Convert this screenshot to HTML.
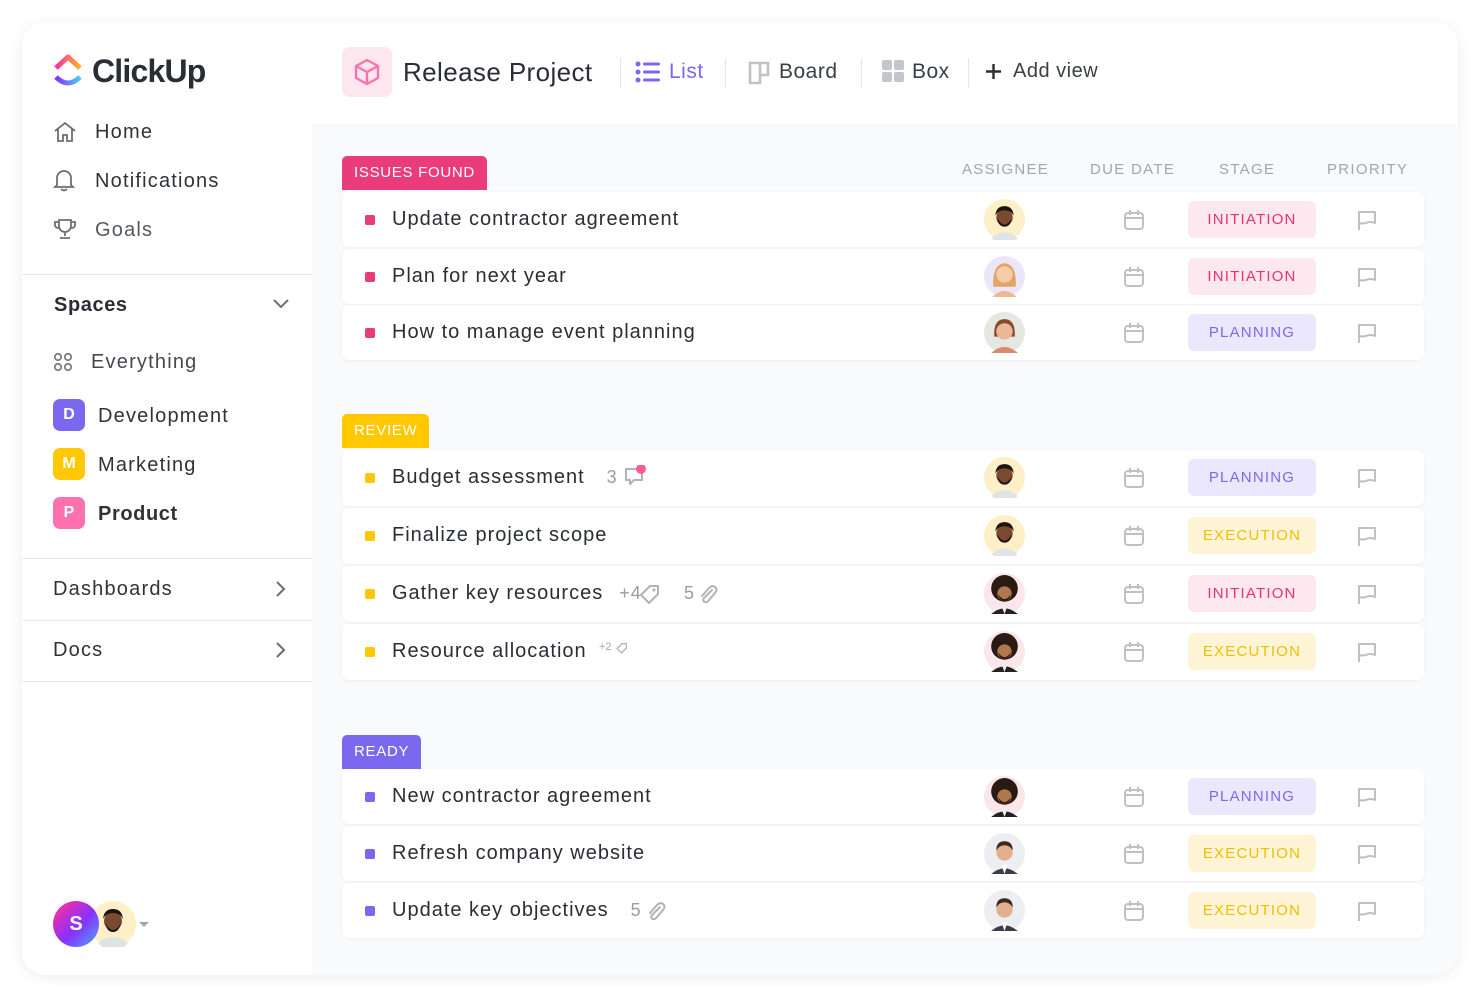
<!DOCTYPE html>
<html><head><meta charset="utf-8"><style>
*{margin:0;padding:0;box-sizing:border-box}
body{width:1480px;height:987px;background:#fff;font-family:"Liberation Sans",sans-serif;position:relative;overflow:hidden;color:#2a2e34}
.card{position:absolute;left:22px;top:22px;width:1436px;height:953px;border-radius:24px;background:#fff;box-shadow:0 2px 14px rgba(0,0,0,.08);overflow:hidden}
.main{position:absolute;left:290px;top:102px;width:1146px;height:851px;background:#f9fafb}
.a{position:absolute}
.nav{position:absolute;font-size:20px;color:#2f3338;letter-spacing:1.2px}
.hr{position:absolute;left:22px;width:290px;height:1px;background:#e8e9ec}
.sq{position:absolute;left:53px;width:32px;height:32px;border-radius:7px;color:#fff;font-weight:bold;font-size:16px;text-align:center;line-height:32px}
.row{position:absolute;left:342px;width:1082px;height:55px;background:#fff;border-radius:7px;box-shadow:0 1px 3px rgba(0,0,0,.05)}
.row .dot{position:absolute;left:23px;top:23px;width:10px;height:10px;border-radius:2px}
.row .t{position:absolute;left:50px;top:16px;font-size:20px;letter-spacing:1px;color:#2a2e34;white-space:nowrap}
.row .m{color:#9a9ca2;font-size:18px;margin-left:22px}
.row .av{position:absolute;left:642px;top:7px}
.row .cal{position:absolute;left:781px;top:17px}
.row .fl{position:absolute;left:1014px;top:17px}
.pill{position:absolute;left:846px;top:9px;width:128px;height:37px;border-radius:6px;font-size:15px;letter-spacing:1.2px;text-align:center;line-height:37px}
.ini{background:#fde8ef;color:#e8326f}
.pla{background:#ebe8fd;color:#7b68ee}
.exe{background:#fff5d6;color:#f0be00}
.tag{position:absolute;left:342px;height:34px;border-radius:5px 5px 0 0;color:#fff;font-size:15px;letter-spacing:.7px;padding:0 12px;line-height:34px}
.col{position:absolute;top:161px;font-size:15px;letter-spacing:1.3px;color:#a3a6ab}
</style></head><body>
<div class="card">
<div class="main"></div>
</div>
<svg class="a" style="left:53px;top:53px" width="30" height="36" viewBox="0 0 30 36">
<defs><linearGradient id="g1" x1="0" x2="1"><stop offset="0" stop-color="#fa2bb0"/><stop offset="1" stop-color="#ffb321"/></linearGradient>
<linearGradient id="g2" x1="0" x2="1"><stop offset="0" stop-color="#8930fd"/><stop offset="1" stop-color="#49ccf9"/></linearGradient></defs>
<path d="M3 15 L15 4 L27 15" fill="none" stroke="url(#g1)" stroke-width="5" stroke-linejoin="round"/>
<path d="M3 24 Q15 36 27 24" fill="none" stroke="url(#g2)" stroke-width="5"/>
</svg>
<div class="a" style="left:92px;top:53px;font-size:32px;font-weight:bold;letter-spacing:-.8px;color:#292d34">ClickUp</div>

<svg class="a" style="left:53px;top:121px" width="24" height="22" viewBox="0 0 24 22" fill="none" stroke="#6b6f76" stroke-width="1.8"><path d="M2 10 L12 2 L22 10 M5 8 V20 H10 V14 H14 V20 H19 V8"/></svg>
<div class="nav" style="left:95px;top:121px">Home</div>
<svg class="a" style="left:53px;top:168px" width="22" height="24" viewBox="0 0 22 24" fill="none" stroke="#6b6f76" stroke-width="1.8"><path d="M4 17 V10 A7 7 0 0 1 18 10 V17 L20 19 H2 Z M8 21 Q11 24 14 21"/></svg>
<div class="nav" style="left:95px;top:170px">Notifications</div>
<svg class="a" style="left:53px;top:218px" width="24" height="22" viewBox="0 0 24 22" fill="none" stroke="#6b6f76" stroke-width="1.8"><path d="M6 2 H18 V8 A6 6 0 0 1 6 8 Z M6 4 H2 V7 Q2 10 6 10 M18 4 H22 V7 Q22 10 18 10 M12 14 V18 M7 20 H17"/></svg>
<div class="nav" style="left:95px;top:219px;color:#55595f">Goals</div>
<div class="hr" style="top:274px"></div>
<div class="nav" style="left:54px;top:294px;font-weight:bold;color:#2a2e34;letter-spacing:.6px">Spaces</div>
<svg class="a" style="left:272px;top:298px" width="18" height="12" viewBox="0 0 18 12" fill="none" stroke="#6b6f76" stroke-width="2"><path d="M2 2 L9 9 L16 2"/></svg>
<svg class="a" style="left:53px;top:352px" width="20" height="20" viewBox="0 0 20 20" fill="none" stroke="#7a7e85" stroke-width="1.8"><circle cx="5" cy="5" r="3.2"/><circle cx="15" cy="5" r="3.2"/><circle cx="5" cy="15" r="3.2"/><circle cx="15" cy="15" r="3.2"/></svg>
<div class="nav" style="left:91px;top:351px;color:#45494f">Everything</div>
<div class="sq" style="top:399px;background:#7b68ee">D</div>
<div class="nav" style="left:98px;top:405px">Development</div>
<div class="sq" style="top:448px;background:#ffc800">M</div>
<div class="nav" style="left:98px;top:454px">Marketing</div>
<div class="sq" style="top:497px;background:#fd71af">P</div>
<div class="nav" style="left:98px;top:503px;font-weight:bold;letter-spacing:.6px">Product</div>
<div class="hr" style="top:558px"></div>
<div class="nav" style="left:53px;top:578px">Dashboards</div>
<svg class="a" style="left:275px;top:580px" width="12" height="18" viewBox="0 0 12 18" fill="none" stroke="#6b6f76" stroke-width="2"><path d="M2 2 L9 9 L2 16"/></svg>
<div class="hr" style="top:620px"></div>
<div class="nav" style="left:53px;top:639px">Docs</div>
<svg class="a" style="left:275px;top:641px" width="12" height="18" viewBox="0 0 12 18" fill="none" stroke="#6b6f76" stroke-width="2"><path d="M2 2 L9 9 L2 16"/></svg>
<div class="hr" style="top:681px"></div>

<svg class="a" style="left:90px;top:901px" width="46" height="46" viewBox="0 0 46 46"><circle cx="23" cy="23" r="23" fill="#fdf0c8"/><circle cx="23" cy="20" r="9" fill="#7a4a30"/><path d="M13 18 Q14 8 23 8 Q32 8 33 18 Q30 12 23 12 Q16 12 13 18Z" fill="#1e140e"/><path d="M15 22 Q23 36 31 22 Q29 31 23 31 Q17 31 15 22Z" fill="#1e140e"/><path d="M8 42 Q23 30 38 42 L34 46 H12Z" fill="#dfe3e6"/></svg>
<div class="a" style="left:53px;top:901px;width:46px;height:46px;border-radius:50%;background:linear-gradient(135deg,#f531a4 10%,#8930fd 55%,#49a8f9);color:#fff;font-weight:bold;font-size:20px;text-align:center;line-height:46px">S</div>
<div class="a" style="left:139px;top:922px;width:0;height:0;border-left:5px solid transparent;border-right:5px solid transparent;border-top:5px solid #a3a6ab"></div>

<div class="a" style="left:342px;top:47px;width:50px;height:50px;border-radius:8px;background:#fde7ee"></div>
<svg class="a" style="left:352px;top:57px" width="30" height="30" viewBox="0 0 30 30" fill="none" stroke="#fd71af" stroke-width="2.4" stroke-linejoin="round"><path d="M15 3 L26 9 V21 L15 27 L4 21 V9 Z M4 9 L15 15 L26 9 M15 15 V27"/></svg>
<div class="a" style="left:403px;top:57px;font-size:26px;color:#2a2e34;letter-spacing:.4px">Release Project</div>
<div class="a" style="left:620px;top:58px;width:1px;height:30px;background:#e5e6e9"></div>
<svg class="a" style="left:635px;top:60px" width="26" height="24" viewBox="0 0 26 24" fill="#7b68ee"><circle cx="3" cy="4" r="2.5"/><circle cx="3" cy="12" r="2.5"/><circle cx="3" cy="20" r="2.5"/><rect x="8" y="2.5" width="17" height="3" rx="1.5"/><rect x="8" y="10.5" width="17" height="3" rx="1.5"/><rect x="8" y="18.5" width="17" height="3" rx="1.5"/></svg>
<div class="a" style="left:669px;top:60px;font-size:21px;color:#7b68ee;letter-spacing:.5px">List</div>
<div class="a" style="left:725px;top:58px;width:1px;height:30px;background:#e5e6e9"></div>
<svg class="a" style="left:748px;top:61px" width="22" height="24" viewBox="0 0 22 24" fill="none" stroke="#bfc2c7" stroke-width="2.6"><path d="M2 2 H20 V14 H12 V22 H2 Z M12 2 V14"/></svg>
<div class="a" style="left:779px;top:60px;font-size:21px;color:#3a3e44;letter-spacing:.5px">Board</div>
<div class="a" style="left:861px;top:58px;width:1px;height:30px;background:#e5e6e9"></div>
<svg class="a" style="left:882px;top:60px" width="22" height="22" viewBox="0 0 22 22" fill="#c3c6cb"><rect x="0" y="0" width="10" height="10" rx="2"/><rect x="12" y="0" width="10" height="10" rx="2"/><rect x="0" y="12" width="10" height="10" rx="2"/><rect x="12" y="12" width="10" height="10" rx="2"/></svg>
<div class="a" style="left:912px;top:60px;font-size:21px;color:#3a3e44;letter-spacing:.5px">Box</div>
<div class="a" style="left:968px;top:58px;width:1px;height:30px;background:#e5e6e9"></div>
<svg class="a" style="left:985px;top:63px" width="17" height="17" viewBox="0 0 17 17" stroke="#2a2e34" stroke-width="2.4"><path d="M8.5 1 V16 M1 8.5 H16"/></svg>
<div class="a" style="left:1013px;top:60px;font-size:20px;color:#3a3e44;letter-spacing:.5px">Add view</div>

<div class="col" style="left:962px">ASSIGNEE</div>
<div class="col" style="left:1090px">DUE DATE</div>
<div class="col" style="left:1219px">STAGE</div>
<div class="col" style="left:1327px">PRIORITY</div>

<div class="tag" style="top:156px;background:#ea3c78">ISSUES FOUND</div>
<div class="tag" style="top:414px;background:#ffc800">REVIEW</div>
<div class="tag" style="top:735px;background:#7b68ee">READY</div>

<svg width="0" height="0" style="position:absolute">
<defs>
<symbol id="cal" viewBox="0 0 22 22"><g fill="none" stroke="#bdc0c5" stroke-width="2"><rect x="2" y="4" width="18" height="16" rx="3"/><path d="M2 9 H20 M7 1 V6 M15 1 V6"/></g></symbol>
<symbol id="fl" viewBox="0 0 22 22"><path d="M3 21 V3 H19 V14 Q14 12 10 14 Q6 15 3 14" fill="none" stroke="#bdc0c5" stroke-width="2" stroke-linejoin="round"/></symbol>
<symbol id="avA" viewBox="0 0 40 40"><circle cx="20" cy="20" r="20" fill="#fdf0c8"/><circle cx="20" cy="18" r="8" fill="#7a4a30"/><path d="M11 16 Q12 7 20 7 Q28 7 29 16 Q26 11 20 11 Q14 11 11 16Z" fill="#1e140e"/><path d="M13 19 Q20 31 27 19 Q26 27 20 27 Q14 27 13 19Z" fill="#1e140e"/><path d="M7 38 Q20 27 33 38 L30 40 H10Z" fill="#dfe3e6"/></symbol>
<symbol id="avB" viewBox="0 0 40 40"><circle cx="20" cy="20" r="20" fill="#ece6fb"/><path d="M9 30 Q8 8 20 7 Q32 8 31 30 Z" fill="#e3a463"/><circle cx="20" cy="18" r="8" fill="#f4ccaa"/><path d="M8 40 Q20 28 32 40Z" fill="#f0b890"/></symbol>
<symbol id="avC" viewBox="0 0 40 40"><circle cx="20" cy="20" r="20" fill="#e5e8e0"/><path d="M10 24 Q9 7 20 7 Q31 7 30 24 Z" fill="#8a4a2c"/><circle cx="20" cy="19" r="8" fill="#eab897"/><path d="M7 40 Q20 28 33 40Z" fill="#d98a70"/></symbol>
<symbol id="avD" viewBox="0 0 40 40"><circle cx="20" cy="20" r="20" fill="#fbe6ec"/><circle cx="20" cy="15" r="13" fill="#2a1a12"/><circle cx="20" cy="20" r="7" fill="#b07850"/><path d="M14 21 Q20 30 26 21 Q25 27 20 27 Q15 27 14 21Z" fill="#2a1a12"/><path d="M7 40 Q20 29 33 40Z" fill="#222"/><path d="M17 32 L20 40 L23 32Z" fill="#eee"/></symbol>
<symbol id="avE" viewBox="0 0 40 40"><circle cx="20" cy="20" r="20" fill="#eceef2"/><circle cx="20" cy="19" r="8" fill="#e2b08e"/><path d="M12 17 Q12 8 20 8 Q28 8 28 17 Q25 12 20 12 Q15 12 12 17Z" fill="#3a2a20"/><path d="M7 40 Q20 29 33 40Z" fill="#3a3e48"/><path d="M17 31 L20 40 L23 31Z" fill="#fff"/></symbol>
</defs></svg>

<div class="row" style="top:192px"><div class="dot" style="background:#ea3c78"></div><div class="t">Update contractor agreement</div><svg class="av" width="41" height="41"><use href="#avA"/></svg><svg class="cal" width="22" height="22"><use href="#cal"/></svg><div class="pill ini">INITIATION</div><svg class="fl" width="22" height="22"><use href="#fl"/></svg></div>
<div class="row" style="top:249px"><div class="dot" style="background:#ea3c78"></div><div class="t">Plan for next year</div><svg class="av" width="41" height="41"><use href="#avB"/></svg><svg class="cal" width="22" height="22"><use href="#cal"/></svg><div class="pill ini">INITIATION</div><svg class="fl" width="22" height="22"><use href="#fl"/></svg></div>
<div class="row" style="top:305px"><div class="dot" style="background:#ea3c78"></div><div class="t">How to manage event planning</div><svg class="av" width="41" height="41"><use href="#avC"/></svg><svg class="cal" width="22" height="22"><use href="#cal"/></svg><div class="pill pla">PLANNING</div><svg class="fl" width="22" height="22"><use href="#fl"/></svg></div>

<div class="row" style="top:450px;height:56px"><div class="dot" style="background:#ffc800"></div><div class="t">Budget assessment<span class="m">3</span></div><svg class="a" style="left:282px;top:15px" width="24" height="22" viewBox="0 0 24 22"><path d="M2 4 H18 V15 H10 L6 19 V15 H2 Z" fill="none" stroke="#b0b3b8" stroke-width="2" stroke-linejoin="round"/><circle cx="17" cy="4" r="5" fill="#fd5c94"/></svg><svg class="av" width="41" height="41"><use href="#avA"/></svg><svg class="cal" width="22" height="22"><use href="#cal"/></svg><div class="pill pla">PLANNING</div><svg class="fl" width="22" height="22"><use href="#fl"/></svg></div>
<div class="row" style="top:508px;height:56px"><div class="dot" style="background:#ffc800"></div><div class="t">Finalize project scope</div><svg class="av" width="41" height="41"><use href="#avA"/></svg><svg class="cal" width="22" height="22"><use href="#cal"/></svg><div class="pill exe">EXECUTION</div><svg class="fl" width="22" height="22"><use href="#fl"/></svg></div>
<div class="row" style="top:566px;height:56px"><div class="dot" style="background:#ffc800"></div><div class="t">Gather key resources<span class="m" style="margin-left:16px">+4</span></div><svg class="a" style="left:297px;top:17px" width="22" height="22" viewBox="0 0 22 22"><path d="M11 3 H19 V11 L10 20 L2 12 Z" fill="none" stroke="#b0b3b8" stroke-width="2" stroke-linejoin="round"/><circle cx="15" cy="7" r="1.5" fill="#b0b3b8"/></svg><span class="a" style="left:342px;top:17px;font-size:18px;color:#9a9ca2">5</span><svg class="a" style="left:356px;top:18px" width="20" height="22" viewBox="0 0 20 22"><path d="M14 6 L6 14 Q4 17 7 18 Q9 19 11 16 L17 9 Q20 5 17 3 Q14 1 11 4 L4 12" fill="none" stroke="#b0b3b8" stroke-width="2" stroke-linecap="round"/></svg><svg class="av" width="41" height="41"><use href="#avD"/></svg><svg class="cal" width="22" height="22"><use href="#cal"/></svg><div class="pill ini">INITIATION</div><svg class="fl" width="22" height="22"><use href="#fl"/></svg></div>
<div class="row" style="top:624px;height:56px"><div class="dot" style="background:#ffc800"></div><div class="t">Resource allocation</div><span class="a" style="left:257px;top:17px;font-size:11px;color:#a3a6ab">+2</span><svg class="a" style="left:274px;top:18px" width="12" height="12" viewBox="0 0 22 22"><path d="M11 3 H19 V11 L10 20 L2 12 Z" fill="none" stroke="#b0b3b8" stroke-width="2.5"/></svg><svg class="av" width="41" height="41"><use href="#avD"/></svg><svg class="cal" width="22" height="22"><use href="#cal"/></svg><div class="pill exe">EXECUTION</div><svg class="fl" width="22" height="22"><use href="#fl"/></svg></div>

<div class="row" style="top:769px"><div class="dot" style="background:#7b68ee"></div><div class="t">New contractor agreement</div><svg class="av" width="41" height="41"><use href="#avD"/></svg><svg class="cal" width="22" height="22"><use href="#cal"/></svg><div class="pill pla">PLANNING</div><svg class="fl" width="22" height="22"><use href="#fl"/></svg></div>
<div class="row" style="top:826px"><div class="dot" style="background:#7b68ee"></div><div class="t">Refresh company website</div><svg class="av" width="41" height="41"><use href="#avE"/></svg><svg class="cal" width="22" height="22"><use href="#cal"/></svg><div class="pill exe">EXECUTION</div><svg class="fl" width="22" height="22"><use href="#fl"/></svg></div>
<div class="row" style="top:883px"><div class="dot" style="background:#7b68ee"></div><div class="t">Update key objectives<span class="m">5</span></div><svg class="a" style="left:304px;top:18px" width="20" height="22" viewBox="0 0 20 22"><path d="M14 6 L6 14 Q4 17 7 18 Q9 19 11 16 L17 9 Q20 5 17 3 Q14 1 11 4 L4 12" fill="none" stroke="#b0b3b8" stroke-width="2" stroke-linecap="round"/></svg><svg class="av" width="41" height="41"><use href="#avE"/></svg><svg class="cal" width="22" height="22"><use href="#cal"/></svg><div class="pill exe">EXECUTION</div><svg class="fl" width="22" height="22"><use href="#fl"/></svg></div>
</body></html>
